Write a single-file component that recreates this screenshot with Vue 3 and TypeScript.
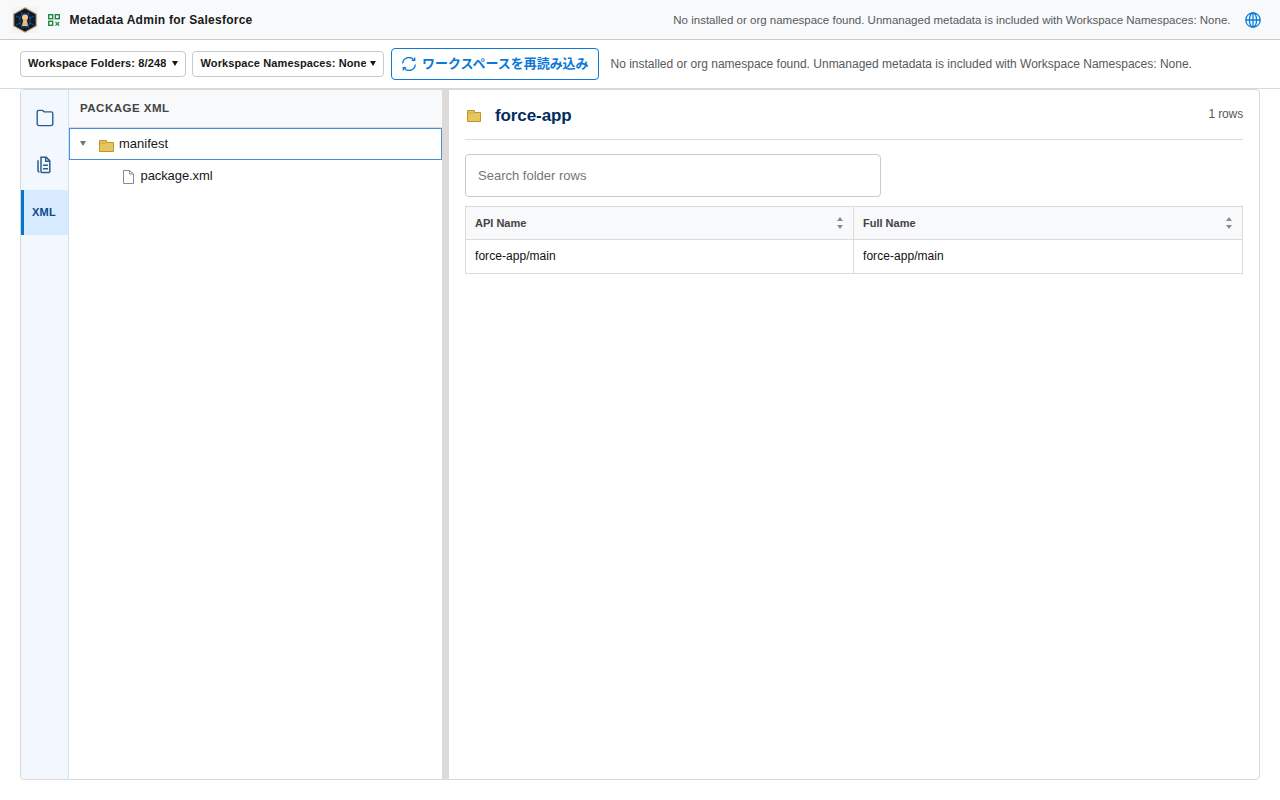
<script setup lang="ts">
interface Column { key: 'apiName' | 'fullName'; label: string }
interface Row { apiName: string; fullName: string }

const notice = 'No installed or org namespace found. Unmanaged metadata is included with Workspace Namespaces: None.'
const columns: Column[] = [
  { key: 'apiName', label: 'API Name' },
  { key: 'fullName', label: 'Full Name' },
]
const rows: Row[] = [{ apiName: 'force-app/main', fullName: 'force-app/main' }]
</script>

<template>
  <div class="app">
    <header class="topbar">
      <svg class="logo" viewBox="0 0 26 26">
        <rect width="26" height="26" rx="2" fill="#f1f3f6" />
        <path d="M13 .8 24.2 7v12L13 25.2 1.8 19V7z" fill="#0a1a33" stroke="#c9a25e" stroke-width="1.1" />
        <path d="M4 9l4 2v5l-4 2M22 9l-4 2v5l4 2M9 5l1.500 3M17 5l-1.500 3M9 21l1.500-2M17 21l-1.500-2M8 11l2.500-4h5L18 11M8 16l2.500 4h5L18 16" fill="none" stroke="#2b5880" stroke-width=".9" />
        <circle cx="13" cy="10.600" r="3" fill="#f3cf8c" />
        <path d="M11.200 12h3.600l1.200 7h-6z" fill="#e8bb78" />
      </svg>
      <svg class="qr" viewBox="0 0 12 12" fill="none" stroke="#22883f" stroke-width="1.400">
        <rect x=".7" y=".7" width="4" height="4" />
        <rect x="7.300" y=".7" width="4" height="4" />
        <rect x=".7" y="7.300" width="4" height="4" />
        <path d="M7.500 8l3.700 3.700M11.200 8 7.500 11.700" stroke-width="1.100" />
      </svg>
      <h1 class="brand">Metadata Admin for Salesforce</h1>
      <span class="top-notice">{{ notice }}</span>
      <svg class="globe" viewBox="0 0 16 16" fill="none" stroke="#0b7bdc" stroke-width="1.300">
        <circle cx="8" cy="8" r="7.200" />
        <ellipse cx="8" cy="8" rx="3.600" ry="7.200" />
        <path d="M.8 8h14.400M8 .8v14.400" />
      </svg>
    </header>

    <div class="toolbar">
      <button class="select folders"><span>Workspace Folders: 8/248</span><i class="caret"></i></button>
      <button class="select namespaces"><span>Workspace Namespaces: None</span><i class="caret"></i></button>
      <button class="reload">
        <svg viewBox="0 0 14 14" fill="none" stroke="#0b78d8" stroke-width="1.300">
          <path d="M.7 6.500A6.300 6.300 0 0 1 11.600 2.600M9.800 3.400h2.900V.6M13.300 7.500A6.300 6.300 0 0 1 2.400 11.400M4.200 10.600H1.300v2.800" />
        </svg>
        <span>ワークスペースを再読み込み</span>
      </button>
      <span class="tool-notice">{{ notice }}</span>
    </div>

    <main class="panel">
      <nav class="rail">
        <button class="rail-item">
          <svg width="18" height="18" viewBox="0 0 18 18" fill="none" stroke="#2b5b93" stroke-width="1.400">
            <path d="M1.200 3.200q0-1.800 1.800-1.800h3.200q.8 0 1.200.8l.5.4q.3.300 1 .3h6.200q1.700 0 1.700 1.700v10q0 2-2 2H3.200q-2 0-2-2z" />
          </svg>
        </button>
        <button class="rail-item docs">
          <svg width="14" height="18" viewBox="0 0 14 18" fill="none" stroke="#2b5b93" stroke-width="1.500">
            <path d="M1 4.200v10.300q0 1.500 1.500 1.500M4 1.200h5.300l3.500 3.700v10.500q0 1-1 1H5q-1 0-1-1z" />
            <path d="M8.700 1.500v3.800h4M6 9.200h5M6 12.700h5" />
          </svg>
        </button>
        <button class="rail-item active">XML</button>
      </nav>

      <aside class="tree">
        <h2 class="tree-title">PACKAGE XML</h2>
        <div class="node selected">
          <i class="twisty"></i>
          <svg class="folder" width="15" height="12" viewBox="0 0 15 12">
            <path d="M.5 11.500V.5h7v2h7v9z" fill="#e7c561" stroke="#be9422" />
            <path d="M1 3h6.500" stroke="#d3aa3b" />
          </svg>
          <span>manifest</span>
        </div>
        <div class="node child">
          <svg width="11" height="14" viewBox="0 0 11 14" fill="#fff" stroke="#7f8c9c">
            <path d="M.5.5h6l4 3.500v9.500H.5zM6.500.5v3.500h4" />
          </svg>
          <span>package.xml</span>
        </div>
      </aside>

      <div class="splitter"></div>

      <section class="detail">
        <div class="detail-head">
          <svg width="14" height="12" viewBox="0 0 14 12">
            <path d="M.5 11.500V.5h7v2h6v9z" fill="#e7c561" stroke="#be9422" />
            <path d="M1 3h6.500" stroke="#d3aa3b" />
          </svg>
          <h2>force-app</h2>
          <span class="count">1 rows</span>
        </div>
        <input class="search" placeholder="Search folder rows" />
        <table class="grid">
          <colgroup><col class="first" /><col /></colgroup>
          <thead>
            <tr>
              <th v-for="c in columns" :key="c.key">
                <div class="th">
                  <span>{{ c.label }}</span>
                  <svg width="6" height="12" viewBox="0 0 6 12" fill="#8a8a8a"><path d="M0 4 3 0l3 4zM0 8h6l-3 4z" /></svg>
                </div>
              </th>
            </tr>
          </thead>
          <tbody>
            <tr v-for="r in rows" :key="r.apiName">
              <td v-for="c in columns" :key="c.key">{{ r[c.key] }}</td>
            </tr>
          </tbody>
        </table>
      </section>
    </main>
  </div>
</template>

<style>
body { margin: 0; background: #fff; }
</style>

<style scoped>
* { box-sizing: border-box; }
.app { width: 1280px; height: 800px; display: flex; flex-direction: column; overflow: hidden; font-family: "Liberation Sans", Arial, "Noto Sans CJK JP", sans-serif; color: #181818; font-size: 13px; }
svg { display: block; flex: none; }
button { font-family: inherit; margin: 0; }
h1, h2 { margin: 0; }
.topbar { height: 40px; flex: none; display: flex; align-items: center; padding: 0 18px 0 12px; background: #f7f9fb; border-bottom: 1px solid #c9c9c9; }
.logo { width: 26px; height: 26px; }
.qr { width: 12px; height: 12px; margin-left: 10px; }
.brand { margin-left: 9.500px; font-size: 12px; line-height: 16px; letter-spacing: .255px; white-space: nowrap; }
.top-notice { margin-left: auto; font-size: 11.500px; line-height: 16px; color: #58595b; white-space: nowrap; }
.globe { width: 16px; height: 16px; margin-left: 14.500px; margin-right: 1px; }
.toolbar { height: 49px; flex: none; display: flex; align-items: center; padding: 0 20px; border-bottom: 1px solid #d9d9d9; }
.select { height: 26px; display: flex; align-items: center; justify-content: space-between; padding: 0 7px 2px; border: 1px solid #c9c9c9; border-radius: 4px; background: #fff; font-size: 11px; font-weight: bold; letter-spacing: .12px; color: #181818; white-space: nowrap; }
.select span { overflow: hidden; line-height: 16px; }
.folders { width: 166px; }
.namespaces { width: 192px; margin-left: 6px; }
.namespaces span { width: 166px; padding-left: .5px; }
.caret { flex: none; border: 3px solid transparent; border-top: 5px solid #181818; border-bottom: 0; }
.reload { width: 208px; height: 32px; margin-left: 7px; display: flex; align-items: center; padding: 0 0 0 10px; border: 1px solid #0b78d8; border-radius: 4px; background: #fff; color: #0b78d8; font-size: 13px; font-weight: bold; white-space: nowrap; }
.reload svg { width: 14px; height: 14px; margin-right: 6px; }
.reload span { padding-bottom: 4px; letter-spacing: -.04px; }
.tool-notice { margin-left: 11.500px; font-size: 12px; color: #58595b; white-space: nowrap; }
.panel { height: 691px; flex: none; margin: 0 20px; display: flex; border: 1px solid #d9d9d9; border-radius: 4px; overflow: hidden; }
.rail { width: 48px; flex: none; background: #f3f8fe; border-right: 1px solid #cfe3fa; padding-top: 6px; }
.rail-item { width: 47px; height: 45px; margin-bottom: 2px; padding: 0 0 2px; display: flex; align-items: center; justify-content: center; border: 0; background: none; font-size: 11px; font-weight: bold; letter-spacing: .3px; color: #0b4a8c; }
.docs { padding-right: 2px; }
.active { background: #d8eaff; border-left: 3px solid #0176d3; padding-right: 4px; }
.tree { width: 373px; flex: none; }
.tree-title { height: 38px; padding: 10px 11px 0; background: #f7f9fb; border-bottom: 1px solid #dddbda; font-size: 11.500px; line-height: 16px; letter-spacing: .5px; color: #444; }
.node { height: 32px; display: flex; align-items: center; font-size: 13px; }
.node span { padding-bottom: 2px; }
.selected { border: 1px solid #4a90d9; padding-left: 10px; }
.twisty { width: 0; height: 0; margin-bottom: 2px; border: 3px solid transparent; border-top: 5px solid #747474; border-bottom: 0; }
.folder { margin: 3px 5px 0 13px; }
.child { padding-left: 54px; }
.child svg { margin-top: 2px; }
.child span { margin-left: 6.500px; letter-spacing: -.09px; }
.splitter { width: 7px; flex: none; background: #dddbda; }
.detail { flex: 1; min-width: 0; padding: 0 16px; }
.detail-head { height: 50px; display: flex; align-items: center; padding-left: 2px; border-bottom: 1px solid #dddbda; }
.detail-head svg { margin-top: 2px; }
.detail-head h2 { margin: 2px 0 0 14px; font-size: 17px; line-height: 22px; letter-spacing: -.1px; color: #032d60; }
.count { margin-left: auto; padding-bottom: 2px; font-size: 12px; letter-spacing: -.15px; color: #58595b; }
.search { display: block; width: 416px; height: 43px; margin: 14px 0 9px; padding: 0 12px; border: 1px solid #c9c9c9; border-radius: 4px; background: #fff; font: 13px "Liberation Sans", Arial, sans-serif; color: #181818; outline: none; }
.search::placeholder { color: #757575; opacity: 1; }
.grid { width: 778px; height: 68px; border-collapse: collapse; table-layout: fixed; }
.first { width: 388px; }
.grid th, .grid td { border: 1px solid #dddbda; padding: 0 9px; text-align: left; }
.grid th { height: 33px; padding-right: 10px; background: #f7f9fb; font-size: 11px; color: #444; }
.grid td { height: 34px; padding-bottom: 2px; font-size: 12px; letter-spacing: .05px; color: #111; }
.th { display: flex; align-items: center; justify-content: space-between; }
</style>
